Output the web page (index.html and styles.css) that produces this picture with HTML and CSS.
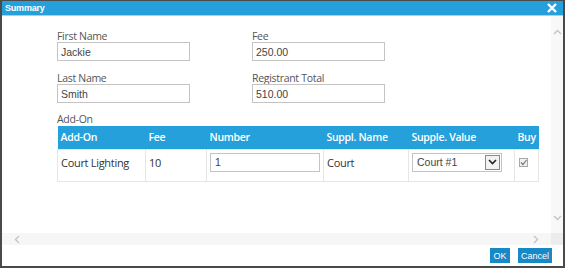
FILE: index.html
```html
<!DOCTYPE html>
<html lang="en">
<head>
    <meta charset="UTF-8">
    <title>Summary</title>
    <link rel="stylesheet" href="styles.css">
</head>
<body>
    <div class="dialog">
        <div class="titlebar">
            <span class="title">Summary</span>
            <svg class="close" width="10" height="10" viewBox="0 0 10 10">
                <path d="M1 1 L9 9 M9 1 L1 9" stroke="#fff" stroke-width="2.4" fill="none"/>
            </svg>
        </div>
        <div class="main">
            <div class="content">
                <div class="fields">
                    <div class="field">
                        <label>First Name</label>
                        <input class="text-input" type="text" value="Jackie">
                    </div>
                    <div class="field">
                        <label>Fee</label>
                        <input class="text-input" type="text" value="250.00">
                    </div>
                    <div class="field">
                        <label>Last Name</label>
                        <input class="text-input" type="text" value="Smith">
                    </div>
                    <div class="field">
                        <label>Registrant Total</label>
                        <input class="text-input" type="text" value="510.00">
                    </div>
                </div>
                <div class="section-label">Add-On</div>
                <table class="addons">
                    <thead>
                        <tr>
                            <th class="c-name">Add-On</th>
                            <th class="c-fee">Fee</th>
                            <th class="c-num">Number</th>
                            <th class="c-sname">Suppl. Name</th>
                            <th class="c-sval">Supple. Value</th>
                            <th class="c-buy">Buy</th>
                        </tr>
                    </thead>
                    <tbody>
                        <tr>
                            <td>Court Lighting</td>
                            <td>10</td>
                            <td><input class="num-input" type="text" value="1"></td>
                            <td>Court</td>
                            <td>
                                <div class="select">
                                    <span>Court #1</span>
                                    <span class="select-btn">
                                        <svg width="9" height="6" viewBox="0 0 9 6"><path d="M1 1 L4.5 4.5 L8 1" stroke="#222" stroke-width="1.6" fill="none"/></svg>
                                    </span>
                                </div>
                            </td>
                            <td>
                                <span class="check">
                                    <svg width="7" height="7" viewBox="0 0 7 7"><path d="M1 3.5 L3 5.5 L6.5 1" stroke="#777" stroke-width="1.2" fill="none"/></svg>
                                </span>
                            </td>
                        </tr>
                    </tbody>
                </table>
            </div>
            <div class="vscroll">
                <svg width="9" height="6" viewBox="0 0 9 6"><path d="M1 5 L4.5 1.5 L8 5" stroke="#c4c4c4" stroke-width="1.4" fill="none"/></svg>
                <svg width="9" height="6" viewBox="0 0 9 6"><path d="M1 1 L4.5 4.5 L8 1" stroke="#c4c4c4" stroke-width="1.4" fill="none"/></svg>
            </div>
        </div>
        <div class="hscroll">
            <div class="hscroll-track">
                <svg width="6" height="9" viewBox="0 0 6 9"><path d="M5 1 L1.5 4.5 L5 8" stroke="#c4c4c4" stroke-width="1.4" fill="none"/></svg>
                <svg width="6" height="9" viewBox="0 0 6 9"><path d="M1 1 L4.5 4.5 L1 8" stroke="#c4c4c4" stroke-width="1.4" fill="none"/></svg>
            </div>
            <div class="corner"></div>
        </div>
        <div class="footer">
            <button class="btn">OK</button>
            <button class="btn">Cancel</button>
        </div>
    </div>
</body>
</html>
```

FILE: styles.css
```css
/* Reset */
* {
    margin: 0;
    padding: 0;
    box-sizing: border-box;
}

body {
    font-family: 'Open Sans', 'Noto Sans', sans-serif;
    background-color: #ffffff;
    color: #333;
}

/* Dialog frame */
.dialog {
    width: 565px;
    height: 268px;
    border: 2px solid #4a4a4a;
    border-top-width: 1px;
    display: flex;
    flex-direction: column;
    background: #fff;
}

.titlebar {
    height: 15px;
    flex-shrink: 0;
    background-color: #26a0da;
    border-bottom: 1px solid #9fd3ee;
    display: flex;
    align-items: center;
    justify-content: space-between;
    padding: 0 6px 0 3px;
}

.title {
    font-family: 'Liberation Sans', sans-serif;
    font-weight: bold;
    font-size: 9px;
    color: #fff;
    letter-spacing: -0.2px;
}

.close {
    display: block;
}

/* Scrollable area */
.main {
    flex: 1;
    display: flex;
    min-height: 0;
}

.content {
    flex: 1;
    overflow: hidden;
    padding: 13px 0 0 55px;
}

.fields {
    display: grid;
    grid-template-columns: 195px 195px;
    row-gap: 10px;
}

.field {
    display: flex;
    flex-direction: column;
}

.field label,
.section-label {
    font-size: 10.5px;
    line-height: 14px;
    color: #555;
    letter-spacing: -0.3px;
}

.text-input {
    margin-top: -1px;
    width: 133px;
    height: 19px;
    border: 1px solid #c4c4c4;
    padding: 0 3px;
    font-family: 'Liberation Sans', sans-serif;
    font-size: 10.5px;
    color: #444;
    outline: none;
}

.section-label {
    margin-top: 9px;
}

/* Add-on table */
.addons {
    border-collapse: collapse;
    width: 481px;
    table-layout: fixed;
}

.addons th {
    background-color: #26a0da;
    color: #fff;
    font-size: 10.5px;
    font-weight: 600;
    letter-spacing: -0.3px;
    text-align: left;
    height: 23px;
    padding: 0 3px;
    white-space: nowrap;
}

.addons td {
    border: 1px solid #e6e6e6;
    height: 32px;
    padding: 2px 3px 0;
    font-size: 11px;
    letter-spacing: -0.3px;
    vertical-align: top;
    line-height: 22px;
    white-space: nowrap;
}

.c-name { width: 88px; }
.c-fee { width: 61px; }
.c-num { width: 117px; }
.c-sname { width: 85px; }
.c-sval { width: 106px; }
.c-buy { width: 24px; }

.num-input {
    margin-top: 1px;
    width: 110px;
    height: 19px;
    border: 1px solid #c4c4c4;
    padding: 0 4px;
    font-family: 'Liberation Sans', sans-serif;
    font-size: 10.5px;
    color: #444;
    outline: none;
    vertical-align: top;
}

.select {
    margin-top: 1px;
    width: 90px;
    height: 19px;
    border: 1px solid #c4c4c4;
    display: flex;
    align-items: center;
    justify-content: space-between;
    padding: 0 1px 0 4px;
    font-family: 'Liberation Sans', sans-serif;
    font-size: 10.5px;
    letter-spacing: 0;
    color: #444;
    line-height: 15px;
}

.select-btn {
    width: 15px;
    height: 15px;
    border: 1px solid #8a8a8a;
    background: #f2f2f2;
    display: flex;
    align-items: center;
    justify-content: center;
}

.check {
    margin: 6px 0 0 1px;
    width: 9px;
    height: 9px;
    border: 1px solid #a8a8a8;
    background: #f0f0f0;
    display: flex;
    align-items: center;
    justify-content: center;
}

/* Scrollbars */
.vscroll {
    width: 12px;
    background: #f8f8f8;
    display: flex;
    flex-direction: column;
    align-items: center;
    justify-content: space-between;
    padding: 13px 0 12px;
}

.hscroll {
    height: 12px;
    flex-shrink: 0;
    display: flex;
}

.hscroll-track {
    flex: 1;
    background: #f6f6f6;
    display: flex;
    align-items: center;
    justify-content: space-between;
    padding: 0 12px 0 12px;
}

.corner {
    width: 12px;
    background: #ececec;
}

/* Footer buttons */
.footer {
    height: 21px;
    flex-shrink: 0;
    display: flex;
    justify-content: flex-end;
    align-items: flex-start;
    gap: 8px;
    padding: 3px 11px 0 0;
}

.btn {
    height: 15px;
    border: none;
    background-color: #1789c6;
    color: #fff;
    font-family: 'Liberation Sans', sans-serif;
    font-size: 9px;
    padding: 0 3px;
    cursor: pointer;
}

.btn:first-child {
    width: 20px;
}

.btn:last-child {
    width: 34px;
}
```
